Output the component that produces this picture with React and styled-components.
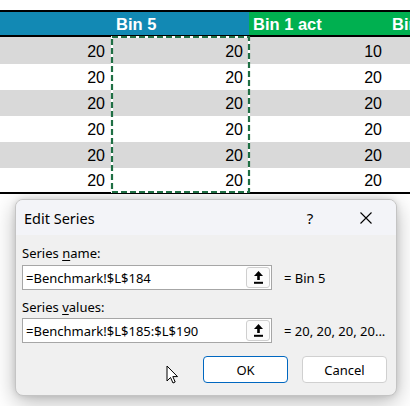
import React from "react";
import styled, { createGlobalStyle } from "styled-components";

const Global = createGlobalStyle`
  html, body { margin: 0; padding: 0; background: #ffffff; }
  #root { width: 410px; height: 406px; }
`;

const Page = styled.div`
  position: relative;
  width: 410px;
  height: 406px;
  overflow: hidden;
  background: #ffffff;
  padding-top: 10px;
  box-sizing: border-box;
`;

const Sheet = styled.div`
  position: relative;
  display: grid;
  grid-template-columns: 111px 138px 140px 1fr;
  border-top: 2px solid #000;
  border-bottom: 2px solid #000;
  font-family: "Liberation Sans", Arial, sans-serif;
`;

const HeadCell = styled.div`
  height: 22px;
  background: ${(p) => (p.$green ? "#00b050" : "#1289b4")};
  border-bottom: 2px solid #000;
  color: #ffffff;
  font-weight: 700;
  font-size: 16.5px;
  line-height: 22px;
  padding: 1px ${(p) => p.$pl || 4}px 0;
  box-sizing: content-box;
  white-space: nowrap;
  overflow: hidden;
`;

const Cell = styled.div`
  height: ${(p) => p.$h}px;
  background: ${(p) => (p.$shade ? "#d9d9d9" : "#ffffff")};
  color: #000;
  font-size: 16px;
  display: flex;
  align-items: center;
  justify-content: flex-end;
  padding: 2px ${(p) => p.$pr || 6}px 0 0;
  box-sizing: border-box;
`;

const Ants = styled.svg`
  position: absolute;
  left: 111px;
  top: 24px;
  width: 139px;
  height: 157px;
  overflow: visible;
  pointer-events: none;
`;

const Dialog = styled.div`
  margin: 5px 0 0 15px;
  width: 382px;
  height: 197px;
  box-sizing: border-box;
  border: 1px solid #c4c4c4;
  border-radius: 8px;
  background: #f0f0f0;
  box-shadow: 0 6px 22px rgba(0, 0, 0, 0.28), 0 0 6px rgba(0, 0, 0, 0.12);
  overflow: hidden;
  display: flex;
  flex-direction: column;
  font-family: "Noto Sans", "Open Sans", sans-serif;
  color: #000;
`;

const TitleBar = styled.div`
  height: 35px;
  background: #f3f4f8;
  display: flex;
  align-items: center;
  padding-left: 8px;
`;

const Title = styled.div`
  flex: 1;
  font-size: 14.5px;
  padding-top: 1px;
`;

const TitleButton = styled.div`
  width: ${(p) => p.$w}px;
  height: 35px;
  display: flex;
  align-items: center;
  justify-content: center;
  font-size: 15px;
`;

const Body = styled.div`
  flex: 1;
  padding: 10px 9px 10px 6px;
  display: flex;
  flex-direction: column;
`;

const Label = styled.div`
  font-size: 13px;
  line-height: 17px;
  margin-bottom: ${(p) => p.$mb}px;
  u { text-decoration: underline; text-underline-offset: 2px; }
`;

const FieldRow = styled.div`
  display: flex;
  align-items: center;
  margin-bottom: ${(p) => p.$mb}px;
`;

const Input = styled.div`
  width: 250px;
  height: ${(p) => p.$h}px;
  box-sizing: border-box;
  border: 1px solid #a6a6a6;
  background: #ffffff;
  display: flex;
  align-items: center;
  padding: 0 1px 0 3px;
  font-size: 13px;
`;

const InputText = styled.span`
  flex: 1;
  white-space: nowrap;
`;

const RefButton = styled.div`
  width: 24px;
  height: calc(100% - 2px);
  box-sizing: border-box;
  border: 1px solid #cfcfcf;
  border-radius: 3px;
  background: #fbfbfb;
  display: flex;
  align-items: center;
  justify-content: center;
`;

const Preview = styled.span`
  margin-left: 12px;
  font-size: 13px;
  white-space: nowrap;
`;

const Buttons = styled.div`
  position: relative;
  display: flex;
  justify-content: flex-end;
  gap: 14px;
`;

const Button = styled.div`
  width: 85px;
  height: 27px;
  box-sizing: border-box;
  border: 1px solid ${(p) => (p.$primary ? "#0067c0" : "#d0d0d0")};
  border-radius: 4px;
  background: #ffffff;
  display: flex;
  align-items: center;
  justify-content: center;
  font-size: 13px;
`;

const Cursor = styled.svg`
  position: absolute;
  left: 144px;
  top: 9px;
  width: 13px;
  height: 19px;
`;

const UpIcon = () => (
  <svg width="9" height="13" viewBox="0 0 9 13">
    <polygon points="4.5,0 9,5 0,5" fill="#000" />
    <rect x="3.2" y="4.5" width="2.6" height="4.5" fill="#000" />
    <rect x="0" y="10.8" width="9" height="2" fill="#000" />
  </svg>
);

const col1 = [20, 20, 20, 20, 20, 20];
const col2 = [20, 20, 20, 20, 20, 20];
const col3 = [10, 20, 20, 20, 20, 20];
const heights = [27, 26, 26, 26, 26, 24];

export default function App() {
  return (
    <Page>
      <Global />
      <Sheet>
        <HeadCell />
        <HeadCell $pl={5}>Bin 5</HeadCell>
        <HeadCell $green $pl={4}>Bin 1 act</HeadCell>
        <HeadCell $green $pl={3}>Bin</HeadCell>
        {heights.map((h, i) => (
          <React.Fragment key={i}>
            <Cell $h={h} $shade={i % 2 === 0}>{col1[i]}</Cell>
            <Cell $h={h} $shade={i % 2 === 0}>{col2[i]}</Cell>
            <Cell $h={h} $shade={i % 2 === 0} $pr={7}>{col3[i]}</Cell>
            <Cell $h={h} $shade={i % 2 === 0} />
          </React.Fragment>
        ))}
        <Ants viewBox="0 0 139 157">
          <rect x="1" y="1" width="137" height="155" fill="none" stroke="#ffffff" strokeWidth="2" />
          <rect x="1" y="1" width="137" height="155" fill="none" stroke="#1f6f44" strokeWidth="2.2" strokeDasharray="6 3" />
        </Ants>
      </Sheet>
      <Dialog>
        <TitleBar>
          <Title>Edit Series</Title>
          <TitleButton $w={52}>?</TitleButton>
          <TitleButton $w={60}>
            <svg width="12" height="12" viewBox="0 0 12 12">
              <path d="M0.5 0.5 L11.5 11.5 M11.5 0.5 L0.5 11.5" stroke="#000" strokeWidth="1.1" fill="none" />
            </svg>
          </TitleButton>
        </TitleBar>
        <Body>
          <Label $mb={3}>Series <u>n</u>ame:</Label>
          <FieldRow $mb={9}>
            <Input $h={25}>
              <InputText>=Benchmark!$L$184</InputText>
              <RefButton><UpIcon /></RefButton>
            </Input>
            <Preview>= Bin 5</Preview>
          </FieldRow>
          <Label $mb={2}>Series <u>v</u>alues:</Label>
          <FieldRow $mb={13}>
            <Input $h={25}>
              <InputText>=Benchmark!$L$185:$L$190</InputText>
              <RefButton><UpIcon /></RefButton>
            </Input>
            <Preview>= 20, 20, 20, 20...</Preview>
          </FieldRow>
          <Buttons>
            <Button $primary>OK</Button>
            <Button>Cancel</Button>
            <Cursor viewBox="0 0 13 19">
              <path d="M1 1 L1 16 L4.5 12.5 L7 18 L9.2 17 L6.8 11.6 L11.5 11.6 Z" fill="#fff" stroke="#000" strokeWidth="1" strokeLinejoin="round" />
            </Cursor>
          </Buttons>
        </Body>
      </Dialog>
    </Page>
  );
}
